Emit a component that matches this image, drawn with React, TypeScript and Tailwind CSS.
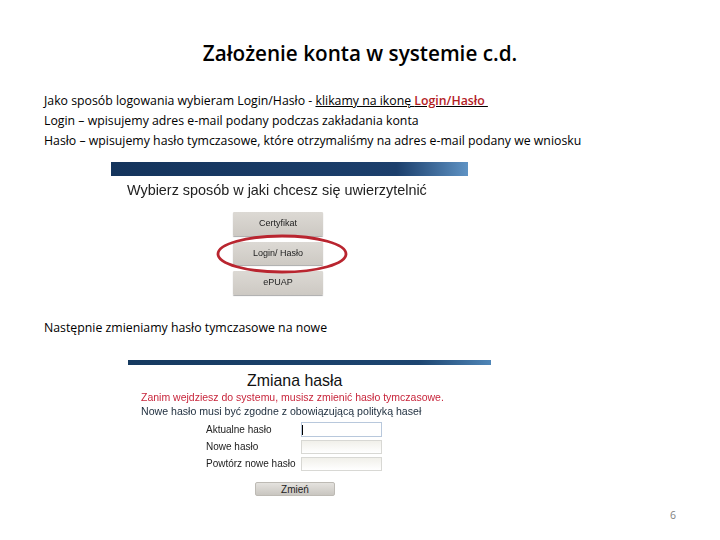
export default function App() {
  const body = "font-['Open_Sans',sans-serif] font-medium text-[12.3px] leading-[20px] text-black whitespace-nowrap";
  const shot = "font-['Liberation_Sans',sans-serif]";
  const btn = "flex items-center justify-center rounded-[1px] bg-gradient-to-b from-[#dcd9d4] to-[#cdc9c3] shadow-[0_1px_1px_#aaa] text-[#222] text-[9px] blur-[0.3px]";
  const input = "w-[81px] h-[14px] border border-[#d8d8d4] bg-gradient-to-b from-[#f1f0ea] to-white";
  return (
    <div className="w-[720px] h-[540px] bg-white overflow-hidden flex flex-col relative">
      <h1 className="mt-[40px] h-[26px] text-center font-['Open_Sans',sans-serif] font-semibold text-[20.7px] leading-[26px] text-black">
        Założenie konta w systemie c.d.
      </h1>
      <div className="mt-[25px] ml-[44px] flex flex-col">
        <p className={body}>
          Jako sposób logowania wybieram Login/Hasło - <span className="underline">klikamy na ikonę <span className="text-[#b3201f] font-semibold">Login/Hasło&nbsp;</span></span>
        </p>
        <p className={body}>Login – wpisujemy adres e-mail podany podczas zakładania konta</p>
        <p className={body}>Hasło – wpisujemy hasło tymczasowe, które otrzymaliśmy na adres e-mail podany we wniosku</p>
      </div>

      <div className={`mt-[11px] ml-[111px] w-[357px] relative flex flex-col ${shot}`}>
        <div className="h-[14px] bg-gradient-to-r from-[#14345c] via-[#1c3f6c] via-80% to-[#5f93c4]" />
        <div className="mt-[6px] ml-[16px] h-[16px] text-[14.4px] leading-[16px] text-[#222] whitespace-nowrap blur-[0.3px]">
          Wybierz sposób w jaki chcesz się uwierzytelnić
        </div>
        <div className="mt-[14px] ml-[122px] w-[90px] flex flex-col gap-[6px]">
          <div className={`h-[24px] ${btn}`}>Certyfikat</div>
          <div className={`h-[23px] ${btn}`}>Login/ Hasło</div>
          <div className={`h-[24px] ${btn}`}>ePUAP</div>
        </div>
        <svg className="absolute left-[105px] top-[71px]" width="132" height="42" viewBox="0 0 132 42">
          <ellipse cx="66" cy="21" rx="64" ry="18" fill="none" stroke="#b9252f" strokeWidth="2.8" />
        </svg>
      </div>

      <p className={`mt-[23px] ml-[44px] ${body}`}>Następnie zmieniamy hasło tymczasowe na nowe</p>

      <div className={`mt-[22px] ml-[128px] w-[363px] flex flex-col ${shot}`}>
        <div className="h-[5px] bg-gradient-to-r from-[#163a60] via-[#1d4570] via-80% to-[#4f86b8]" />
        <div className="mt-[7px] ml-[119px] h-[18px] text-[15.9px] leading-[18px] text-[#111] whitespace-nowrap">Zmiana hasła</div>
        <div className="ml-[13px] h-[14px] text-[10.5px] leading-[14px] text-[#c8263c] whitespace-nowrap blur-[0.3px]">
          Zanim wejdziesz do systemu, musisz zmienić hasło tymczasowe.
        </div>
        <div className="ml-[13px] h-[14px] text-[10.6px] leading-[14px] text-[#1c2c3c] whitespace-nowrap blur-[0.3px]">
          Nowe hasło musi być zgodne z obowiązującą polityką haseł
        </div>
        <div className="mt-[4px] ml-[78px] flex flex-col gap-[2px] text-[10px] text-[#222]">
          <div className="flex items-center h-[15px]">
            <span className="w-[95px] blur-[0.2px]">Aktualne hasło</span>
            <div className="w-[81px] h-[15px] border border-[#b8c8dc] bg-white flex items-center">
              <div className="w-[1px] h-[10px] bg-black" />
            </div>
          </div>
          <div className="flex items-center h-[15px]">
            <span className="w-[95px] blur-[0.2px]">Nowe hasło</span>
            <div className={input} />
          </div>
          <div className="flex items-center h-[15px]">
            <span className="w-[95px] whitespace-nowrap blur-[0.2px]">Powtórz nowe hasło</span>
            <div className={input} />
          </div>
        </div>
        <div className="mt-[11px] ml-[127px] w-[80px] h-[14px] flex items-center justify-center rounded-[2px] bg-gradient-to-b from-[#e4e2de] to-[#c9c6c0] border border-[#bdbab4] text-[10px] text-[#222]">
          Zmień
        </div>
      </div>

      <span className="absolute left-[670px] top-[507px] font-['Open_Sans',sans-serif] text-[10.5px] leading-[16px] text-[#7f7f7f]">6</span>
    </div>
  );
}
